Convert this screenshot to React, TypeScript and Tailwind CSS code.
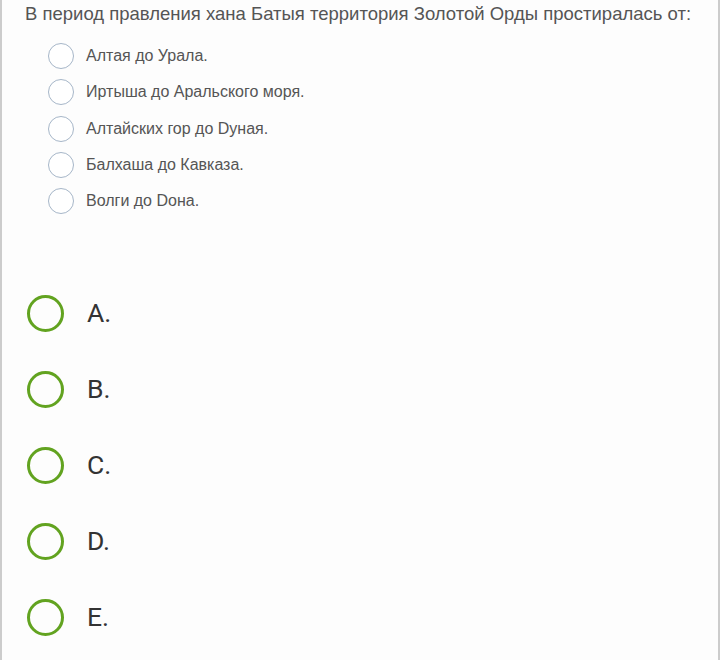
const OPTIONS = [
  "Алтая до Урала.",
  "Иртыша до Аральского моря.",
  "Алтайских гор до Dуная.",
  "Балхаша до Кавказа.",
  "Волги до Dона.",
];

const LETTERS = ["A.", "B.", "C.", "D.", "E."];

export default function App() {
  return (
    <div className="w-[720px] h-[660px] overflow-hidden bg-white flex">
      <div className="flex-1 border-l-2 border-r-2 border-[#cccccc] bg-[#fdfdfd] flex flex-col">
        {/* Question */}
        <div className="pl-[23px] pt-[3px] text-[18.5px] leading-[22px] text-[#555] font-['Liberation_Sans',Arial,sans-serif] whitespace-nowrap">
          В период правления хана Батыя территория Золотой Орды простиралась от:
        </div>
        <div className="pl-[46px] pt-[18px] flex flex-col gap-[10.25px]">
          {OPTIONS.map((o) => (
            <div key={o} className="flex items-center gap-[12px] h-[26px]">
              <span className="w-[26px] h-[26px] rounded-full border-[1.5px] border-[#a6b6c8] bg-white shrink-0" />
              <span className="text-[16px] text-[#555] font-['Liberation_Sans',Arial,sans-serif]">{o}</span>
            </div>
          ))}
        </div>

        {/* Answers */}
        <div className="pl-[25px] pt-[81px] flex flex-col gap-[40px]">
          {LETTERS.map((l) => (
            <div key={l} className="flex items-center h-[36px]">
              <span className="w-[37px] h-[37px] rounded-full border-[3px] border-[#62a320] shrink-0" />
              <span className="ml-[23px] text-[26.5px] text-[#333] font-['Roboto',sans-serif]">{l}</span>
            </div>
          ))}
        </div>
      </div>
    </div>
  );
}
